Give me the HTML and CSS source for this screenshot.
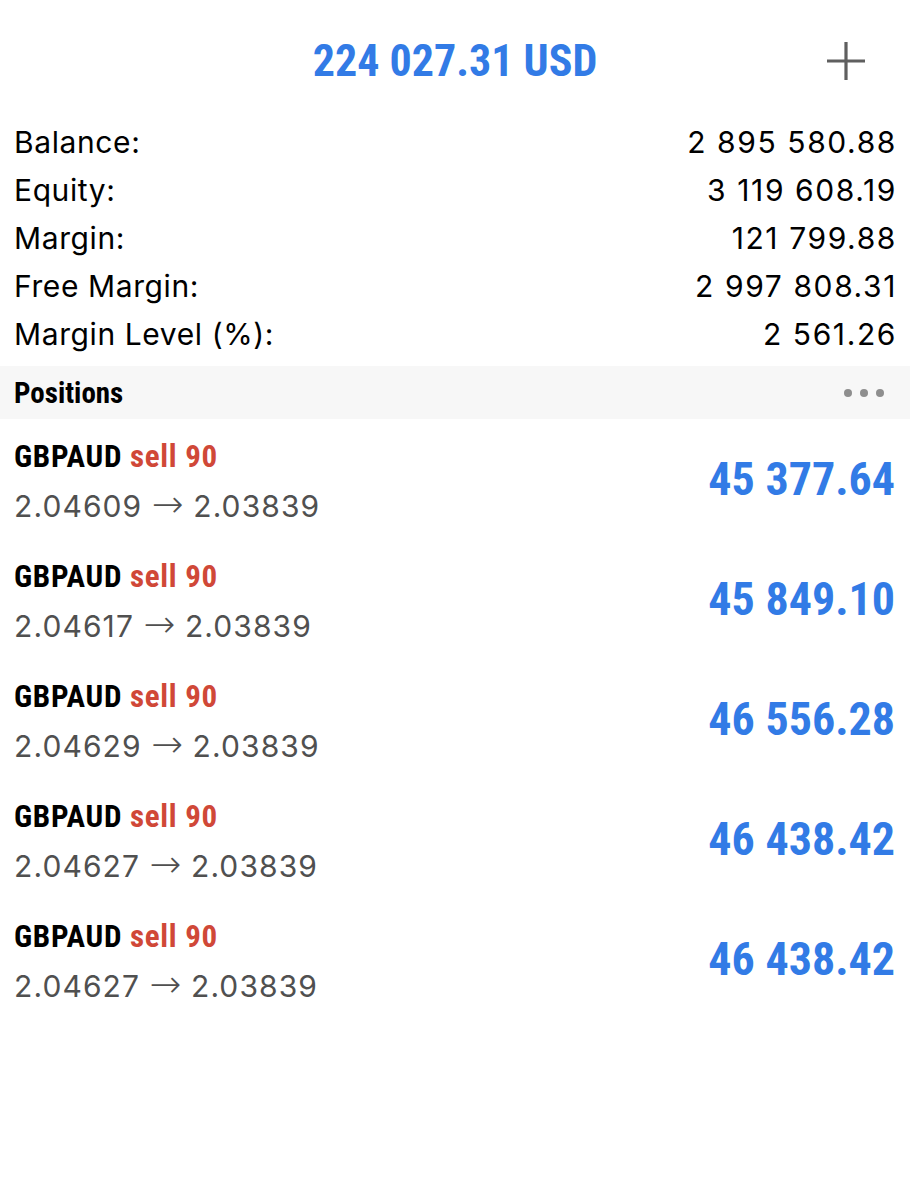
FILE: index.html
```html
<!DOCTYPE html>
<html>
<head>
<meta charset="utf-8">
<link rel="stylesheet" href="styles.css">
</head>
<body>
<div class="screen">
  <header class="top">
    <div class="total">224 027.31 USD</div>
    <svg class="plus" width="38" height="38" viewBox="0 0 38 38"><path d="M19 0V38M0 19H38" stroke="#5f5f5f" stroke-width="3.2"/></svg>
  </header>
  <section class="summary">
    <div class="row"><span>Balance:</span><span class="val">2 895 580.88</span></div>
    <div class="row"><span>Equity:</span><span class="val">3 119 608.19</span></div>
    <div class="row"><span>Margin:</span><span class="val">121 799.88</span></div>
    <div class="row"><span>Free Margin:</span><span class="val">2 997 808.31</span></div>
    <div class="row"><span>Margin Level (%):</span><span class="val">2 561.26</span></div>
  </section>
  <div class="bar">
    <span class="bar-title">Positions</span>
    <span class="dots"><i></i><i></i><i></i></span>
  </div>
  <section class="positions">
    <div class="pos">
      <div class="left">
        <div class="sym">GBPAUD <span class="sell">sell 90</span></div>
        <div class="price">2.04609 <span class="arrow">→</span> 2.03839</div>
      </div>
      <div class="profit">45 377.64</div>
    </div>
    <div class="pos">
      <div class="left">
        <div class="sym">GBPAUD <span class="sell">sell 90</span></div>
        <div class="price">2.04617 <span class="arrow">→</span> 2.03839</div>
      </div>
      <div class="profit">45 849.10</div>
    </div>
    <div class="pos">
      <div class="left">
        <div class="sym">GBPAUD <span class="sell">sell 90</span></div>
        <div class="price">2.04629 <span class="arrow">→</span> 2.03839</div>
      </div>
      <div class="profit">46 556.28</div>
    </div>
    <div class="pos">
      <div class="left">
        <div class="sym">GBPAUD <span class="sell">sell 90</span></div>
        <div class="price">2.04627 <span class="arrow">→</span> 2.03839</div>
      </div>
      <div class="profit">46 438.42</div>
    </div>
    <div class="pos">
      <div class="left">
        <div class="sym">GBPAUD <span class="sell">sell 90</span></div>
        <div class="price">2.04627 <span class="arrow">→</span> 2.03839</div>
      </div>
      <div class="profit">46 438.42</div>
    </div>
  </section>
</div>
</body>
</html>
```
FILE: styles.css
```css
html, body {
  margin: 0;
  padding: 0;
  background: #ffffff;
}
.screen {
  width: 910px;
  font-family: Inter, "Liberation Sans", sans-serif;
  color: #000;
}
.total,
.bar-title,
.sym,
.profit {
  font-family: Roboto, "Open Sans", sans-serif;
  font-stretch: 75%;
  font-weight: 700;
}
.top {
  height: 118px;
  display: flex;
  align-items: flex-start;
  justify-content: center;
  position: relative;
}
.total {
  margin-top: 36px;
  font-size: 44px;
  line-height: 50px;
  color: #327be6;
}
.plus {
  position: absolute;
  right: 45px;
  top: 42px;
}
.summary {
  padding: 0 13px 0 14px;
}
.row {
  display: flex;
  justify-content: space-between;
  font-size: 30px;
  letter-spacing: 0.6px;
  line-height: 48px;
}
.row .val {
  letter-spacing: 1.6px;
}
.bar {
  margin-top: 8px;
  height: 53px;
  background: #f7f7f7;
  display: flex;
  align-items: center;
  justify-content: space-between;
  padding: 0 26px 0 14px;
}
.bar-title {
  font-size: 29px;
}
.dots {
  display: flex;
  gap: 8px;
}
.dots i {
  width: 8px;
  height: 8px;
  border-radius: 50%;
  background: #8e8e8e;
}
.pos {
  box-sizing: border-box;
  height: 120px;
  padding: 10px 15px 0 14px;
  display: flex;
  align-items: center;
  justify-content: space-between;
}
.sym {
  font-size: 31px;
  letter-spacing: 0.7px;
  line-height: 43px;
}
.sell {
  color: #d04838;
}
.price {
  font-size: 30px;
  letter-spacing: 1.1px;
  line-height: 53px;
  color: #505050;
}
.arrow {
  font-family: "DejaVu Sans", sans-serif;
  font-size: 38px;
  font-weight: 300;
  letter-spacing: 0;
}
.profit {
  margin-bottom: 10px;
  font-size: 46px;
  color: #327be6;
}
```
